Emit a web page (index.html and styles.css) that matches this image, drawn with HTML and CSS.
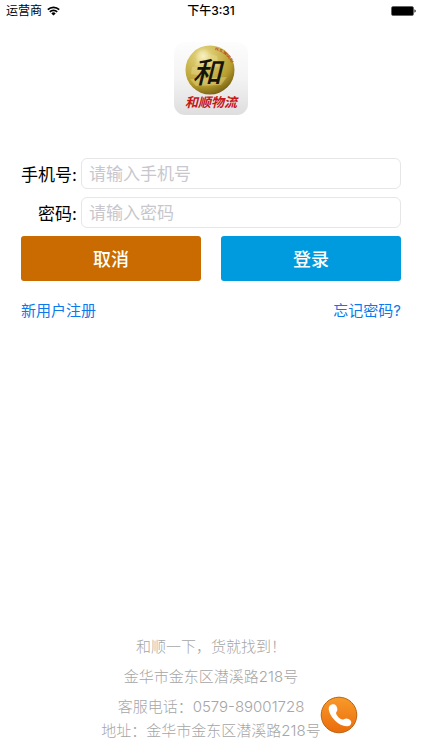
FILE: index.html
```html
<!DOCTYPE html>
<html lang="zh-CN">

<head>
    <meta charset="UTF-8">
    <meta name="viewport" content="width=device-width, initial-scale=1.0">
    <title>和顺物流</title>
    <link rel="stylesheet" href="styles.css">
</head>

<body>
    <header class="status-bar">
        <div class="carrier">
            <span>运营商</span>
            <svg class="wifi" viewBox="0 0 13 10" width="13" height="10" aria-hidden="true">
                <g fill="none" stroke="#000" stroke-width="1.7">
                    <path d="M0.8 3.7a8.1 8.1 0 0 1 11.4 0" />
                    <path d="M2.8 5.9a5.2 5.2 0 0 1 7.4 0" />
                </g>
                <path d="M4.3 7.4a3.1 3.1 0 0 1 4.4 0L6.5 9.6z" />
            </svg>
        </div>
        <span class="time">下午3:31</span>
        <svg class="battery" viewBox="0 0 25 10" width="25" height="10" aria-hidden="true">
            <rect x="0.5" y="0.5" width="22" height="9" rx="1.5" fill="#000" stroke="#555" stroke-width="0.6" />
            <path d="M23.5 3.2q1.2 0.5 1.2 1.8t-1.2 1.8z" />
        </svg>
    </header>

    <main class="login">
        <svg class="logo" viewBox="0 0 74 73" width="74" height="73" role="img" aria-label="和顺物流">
            <defs>
                <linearGradient id="tile" x1="0" y1="0" x2="0" y2="1">
                    <stop offset="0" stop-color="#fdfdfd" />
                    <stop offset="0.5" stop-color="#f3f3f3" />
                    <stop offset="1" stop-color="#dedede" />
                </linearGradient>
                <radialGradient id="ball" cx="0.36" cy="0.22" r="0.85">
                    <stop offset="0" stop-color="#fffde0" />
                    <stop offset="0.2" stop-color="#dccb70" />
                    <stop offset="0.7" stop-color="#b79d2e" />
                    <stop offset="1" stop-color="#6b5710" />
                </radialGradient>
                <path id="arc" d="M41 8Q55 11 60 27" />
            </defs>
            <rect width="74" height="73" rx="11" fill="url(#tile)" />
            <circle cx="36" cy="28" r="24.5" fill="url(#ball)" />
            <!-- ship on the ball -->
            <g fill="#efe19a" opacity="0.4">
                <path d="M24 13l9-4 1 13-13 2zM35 12l8 2 2 11-10-1zM18 25l12-1-1 10-12-2z" />
                <path d="M16 37l37-2-6 8-25 1z" />
            </g>
            <text class="logo-mark" x="33" y="41" text-anchor="middle">和</text>
            <text class="logo-arc"><textPath href="#arc">H.S.WULIU</textPath></text>
            <text class="logo-name" x="37" y="65" text-anchor="middle">和顺物流</text>
        </svg>

        <form class="login-form">
            <div class="fields">
                <label for="phone">手机号:</label>
                <input id="phone" type="tel" placeholder="请输入手机号">
                <label for="password">密码:</label>
                <input id="password" type="password" placeholder="请输入密码">
            </div>
            <div class="buttons">
                <button class="btn btn-cancel" type="button">取消</button>
                <button class="btn btn-login" type="submit">登录</button>
            </div>
        </form>

        <nav class="links">
            <a href="#">新用户注册</a>
            <a href="#">忘记密码?</a>
        </nav>
    </main>

    <footer class="footer">
        <p class="slogan">和顺一下，货就找到！</p>
        <p class="slogan">金华市金东区潜溪路218号</p>
        <p>客服电话：0579-89001728</p>
        <p>地址：金华市金东区潜溪路218号</p>
    </footer>

    <button class="call" type="button" aria-label="拨打客服电话">
        <svg viewBox="0 0 38 38" width="38" height="38" aria-hidden="true">
            <defs>
                <linearGradient id="orange" x1="0" y1="0" x2="0" y2="1">
                    <stop offset="0" stop-color="#f99a2a" />
                    <stop offset="1" stop-color="#ea6c0c" />
                </linearGradient>
            </defs>
            <circle cx="19" cy="19" r="17.8" fill="url(#orange)" stroke="#b9630f" stroke-width="1" />
            <path fill="#fff" d="M9.3 10.3c1.8-2.4 5.3-2.6 6.7-.7 1 1.6 1.6 3.2 1.3 4.7-.3 1.5-1.7 2-1.1 3.6 1.2 2.7 3.4 4.6 6 5.6 1.7.5 2.2-1.2 4-1.1 1.6.1 3.3.8 4.4 2 1.5 2 .3 4.7-2 5.6-4 1.3-9.5-1.4-13.4-5.2-4.3-4.2-7.9-10.8-5.9-14.5z" />
        </svg>
    </button>
</body>

</html>
```
FILE: styles.css
```css
* {
    box-sizing: border-box;
}

body {
    margin: 0;
    min-height: 100vh;
    display: flex;
    flex-direction: column;
    background: #fff;
    color: #000;
    font-family: Inter, "Noto Sans CJK SC", sans-serif;
}

.status-bar {
    display: grid;
    grid-template-columns: 1fr auto 1fr;
    align-items: center;
    height: 22px;
    padding: 0 6px;
    font-size: 12px;
    line-height: 22px;
}

.carrier {
    display: flex;
    align-items: center;
    gap: 5px;
}

.time {
    font-weight: 500;
}

.battery {
    justify-self: end;
}

.login {
    display: flex;
    flex-direction: column;
    padding: 20px 21px 0;
}

.logo {
    align-self: center;
    margin-bottom: 43px;
}

.logo-mark {
    font-size: 29px;
    font-weight: 500;
    font-style: italic;
    fill: #16130a;
}

.logo-arc {
    font-size: 4px;
    font-weight: 700;
    fill: #c3371c;
}

.logo-name {
    font-size: 13px;
    font-weight: 700;
    font-style: italic;
    fill: #c4161c;
}

.fields {
    display: grid;
    grid-template-columns: auto 1fr;
    align-items: center;
    gap: 8px 4px;
    font-size: 17px;
}

.fields label {
    text-align: right;
}

.fields input {
    width: 100%;
    height: 31px;
    padding: 0 7px;
    border: 1px solid #e6e6e6;
    border-radius: 6px;
    background: #fff;
    font-family: inherit;
    font-size: 17px;
}

.fields input::placeholder {
    color: #c7c7cd;
}

.buttons {
    display: grid;
    grid-template-columns: 1fr 1fr;
    gap: 20px;
    margin-top: 8px;
}

.btn {
    height: 45px;
    padding: 0 0 2px;
    border: none;
    border-radius: 3px;
    color: #fff;
    font-family: inherit;
    font-size: 18px;
    font-weight: 500;
    cursor: pointer;
}

.btn-cancel {
    background: #c96b00;
}

.btn-login {
    background: #009bdf;
}

.links {
    display: flex;
    justify-content: space-between;
    margin-top: 18px;
    font-size: 15px;
    line-height: 24px;
}

.links a {
    color: #0a7aec;
    text-decoration: none;
}

.footer {
    margin-top: auto;
    padding-bottom: 7px;
    color: #a6a6a6;
    font-size: 15px;
    font-weight: 300;
    line-height: 24px;
    text-align: center;
}

.footer p {
    margin: 0;
}

.footer .slogan {
    margin-bottom: 6px;
}

/* floating call button */
.call {
    position: fixed;
    right: 64px;
    bottom: 16px;
    width: 38px;
    height: 38px;
    padding: 0;
    border: none;
    border-radius: 50%;
    background: none;
    cursor: pointer;
}

.call svg {
    display: block;
}
```
